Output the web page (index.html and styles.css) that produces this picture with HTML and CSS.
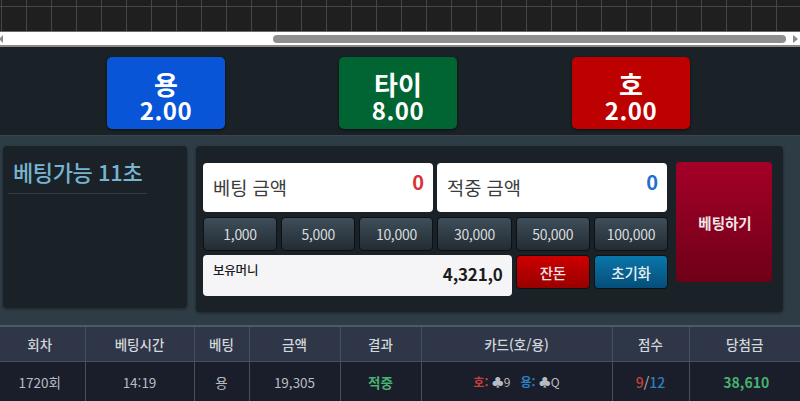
FILE: index.html
```html
<!DOCTYPE html>
<html lang="ko">
<head>
<meta charset="utf-8">
<title>베팅</title>
<link rel="stylesheet" href="styles.css">
</head>
<body>
<div class="chart"></div>
<div class="scrollbar">
  <span class="arrow arrow-left"></span>
  <div class="track"><div class="thumb"></div></div>
  <span class="arrow arrow-right"></span>
</div>
<section class="odds">
  <button class="odd odd-blue"><span class="odd-name">용</span><span class="odd-rate">2.00</span></button>
  <button class="odd odd-green"><span class="odd-name">타이</span><span class="odd-rate">8.00</span></button>
  <button class="odd odd-red"><span class="odd-name">호</span><span class="odd-rate">2.00</span></button>
</section>
<section class="panel">
  <div class="timer-box">
    <div class="timer">베팅가능 11초</div>
  </div>
  <div class="bet-box">
    <div class="bet-main">
      <div class="amounts">
        <div class="amount"><span class="amount-label">베팅 금액</span><span class="amount-value red">0</span></div>
        <div class="amount"><span class="amount-label">적중 금액</span><span class="amount-value blue">0</span></div>
      </div>
      <div class="controls">
        <button class="chip">1,000</button>
        <button class="chip">5,000</button>
        <button class="chip">10,000</button>
        <button class="chip">30,000</button>
        <button class="chip">50,000</button>
        <button class="chip">100,000</button>
        <div class="balance"><span class="balance-label">보유머니</span><span class="balance-value">4,321,0</span></div>
        <button class="chip chip-red">잔돈</button>
        <button class="chip chip-blue">초기화</button>
      </div>
    </div>
    <button class="place">베팅하기</button>
  </div>
</section>
<table class="history">
  <thead>
    <tr><th class="c1">회차</th><th class="c2">베팅시간</th><th class="c3">베팅</th><th class="c4">금액</th><th class="c5">결과</th><th class="c6">카드(호/용)</th><th class="c7">점수</th><th class="c8">당첨금</th></tr>
  </thead>
  <tbody>
    <tr>
      <td class="c1">1720회</td><td>14:19</td><td>용</td><td>19,305</td><td class="win">적중</td>
      <td class="cards"><b class="t-red">호:</b> ♣9 &nbsp;&nbsp;<b class="t-blue">용:</b> ♣Q</td>
      <td class="score"><span class="t-red">9</span>/<span class="t-blue">12</span></td>
      <td class="win prize">38,610</td>
    </tr>
  </tbody>
</table>
</body>
</html>
```
FILE: styles.css
```css
* { box-sizing: border-box; }
html, body { margin: 0; padding: 0; }
body {
  width: 800px;
  height: 401px;
  overflow: hidden;
  background: #1b2227;
  font-family: "Noto Sans CJK KR", "Noto Sans", sans-serif;
}
button { font-family: inherit; border: 0; padding: 0; }

.chart {
  height: 32px;
  background-color: #1f1f1f;
  background-image:
    linear-gradient(#454545, #454545),
    repeating-linear-gradient(90deg, #454545 0 1px, transparent 1px 25px);
  background-size: 100% 1px, 100% 100%;
  background-position: 0 6px, 1px 0;
  background-repeat: no-repeat;
  border-bottom: 1px solid #6a6a6a;
}
.scrollbar {
  height: 15px;
  background: #fff;
  border-bottom: 2px solid #8a8a8a;
  display: flex;
  align-items: center;
}
.arrow { width: 0; height: 0; border-top: 4px solid transparent; border-bottom: 4px solid transparent; }
.arrow-left { border-right: 4px solid #8a8a8a; margin-left: -1px; }
.arrow-right { border-left: 5px solid #8a8a8a; margin-right: 2px; margin-left: 7px; }
.track { flex: 1; padding-left: 270px; }
.thumb { height: 8px; border-radius: 4px; background: #8f8f8f; width: 513px; }

.odds {
  height: 88px;
  display: flex;
  padding: 10px 0 0 107px;
  gap: 114px;
}
.odd {
  width: 118px;
  height: 72px;
  border-radius: 5px;
  color: #fff;
  display: flex;
  flex-direction: column;
  align-items: center;
  justify-content: flex-start;
  padding-top: 14px;
  box-shadow: 0 1px 3px rgba(0, 0, 0, .6);
}
.odd-red { margin-left: 1px; }
.odd-blue { background: #0855d8; }
.odd-green { background: #006533; }
.odd-red { background: #bd0000; }
.odd-name { font-size: 26px; font-weight: 700; line-height: 26px; }
.odd-rate { font-size: 24px; font-weight: 700; line-height: 26px; letter-spacing: .6px; }

.panel {
  height: 190px;
  display: flex;
  background: #2e3c46;
  padding: 10px 0 0 3px;
  border-top: 1px solid #38454e;
}
.timer-box {
  width: 184px;
  height: 162px;
  background: #1b2227;
  border-radius: 4px;
  padding: 3px 5px 0;
  box-shadow: 0 1px 3px rgba(0, 0, 0, .4);
}
.timer {
  width: 139px;
  height: 45px;
  color: #76b4d2;
  font-size: 22px;
  font-weight: 500;
  line-height: 40px;
  letter-spacing: -.4px;
  white-space: nowrap;
  padding: 2px 0 0 5px;
  border-bottom: 1px solid #333c42;
}
.bet-box {
  width: 587px;
  height: 166px;
  margin-left: 9px;
  background: #1b2227;
  border-radius: 4px;
  display: flex;
  align-items: flex-start;
  padding: 16px 0 0 7px;
  box-shadow: 0 1px 3px rgba(0, 0, 0, .4);
}
.bet-main { width: 465px; margin-top: 1px; }
.amounts { display: flex; gap: 4px; padding-right: 1px; }
.amount {
  flex: 1;
  height: 49px;
  background: #fff;
  border-radius: 4px;
  display: flex;
  justify-content: space-between;
  padding: 0 9px 0 10px;
}
.amount-label { font-size: 18.7px; line-height: 47px; color: #3c3c3c; }
.amount-value { font-size: 20px; font-weight: 700; line-height: 38px; }
.red { color: #d9333a; }
.blue { color: #1f70cf; }
.controls {
  display: grid;
  grid-template-columns: repeat(6, 1fr);
  grid-template-rows: 34px 34px;
  gap: 4px;
  margin-top: 5px;
}
.chip {
  height: 34px;
  border-radius: 4px;
  border: 1px solid #0c1114;
  background: linear-gradient(#3e4e5a, #232c33);
  color: #d9dcdf;
  font-size: 14px;
  letter-spacing: -.3px;
}
.chip-red { background: linear-gradient(#cd0000, #980000); color: #f6e4e4; font-size: 14.5px; font-weight: 500; }
.chip-blue { background: linear-gradient(#0a77ab, #064d78); color: #e6eef3; font-size: 14.5px; font-weight: 500; }
.balance {
  grid-column: span 4;
  height: 41px;
  background: #f5f5f7;
  border-radius: 4px;
  display: flex;
  justify-content: space-between;
  padding: 0 9px 0 10px;
  color: #1c1c1c;
}
.balance-label { font-size: 12.5px; font-weight: 500; line-height: 30px; letter-spacing: -.2px; }
.balance-value { font-size: 17px; font-weight: 700; line-height: 37px; letter-spacing: -.2px; }
.place {
  width: 96px;
  height: 120px;
  margin-left: 8px;
  border-radius: 4px;
  background: linear-gradient(#a50027, #6e0018);
  color: #f4e6e8;
  font-size: 14.5px;
  font-weight: 700;
  padding-left: 2px;
}

.history {
  width: 800px;
  border-collapse: collapse;
  table-layout: fixed;
  border-top: 2px solid #4b5b69;
}
.history th, .history td {
  text-align: center;
  padding: 1px 0 0;
  border-left: 1px solid #46505e;
  font-size: 13.5px;
}
.history th:first-child, .history td:first-child { border-left: 0; }
.history th {
  height: 35px;
  background: #2e3648;
  color: #d4d7db;
  font-weight: 500;
  border-bottom: 1px solid #46505e;
}
.history td {
  height: 40px;
  background: #191e2a;
  color: #b8bcc2;
}
.history .c1 { width: 85px; padding-right: 5px; }
.c2 { width: 109px; }
.c3 { width: 55px; }
.c4 { width: 91px; }
.c5 { width: 81px; }
.c6 { width: 191px; }
.c7 { width: 77px; }
.c8 { width: 111px; }
.win { font-weight: 700; }
.history td.win { color: #47b26f; }
.history td.cards { font-size: 12px; }
.t-red { color: #c9403a; font-weight: 700; }
.t-blue { color: #2d7fbe; font-weight: 700; }
.score .t-red, .score .t-blue { font-weight: 500; }
.history td.prize { font-size: 14px; padding-left: 3px; }
.history td.score { font-size: 14px; }
```
